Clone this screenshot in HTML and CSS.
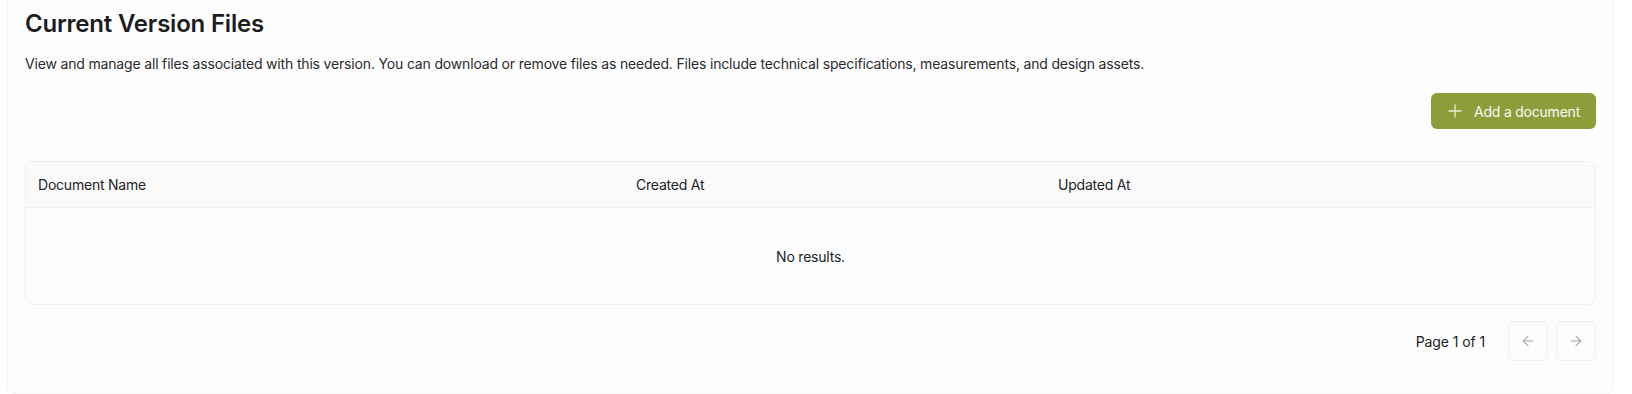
FILE: index.html
```html
<!DOCTYPE html>
<html lang="en">
<head>
    <meta charset="UTF-8">
    <meta name="viewport" content="width=device-width, initial-scale=1.0">
    <title>Current Version Files</title>
    <link rel="stylesheet" href="styles.css">
</head>
<body>
    <div class="page">
        <div class="card">
            <h1 class="card-title">Current Version Files</h1>
            <p class="card-desc">View and manage all files associated with this version. You can download or remove files as needed. Files include technical specifications, measurements, and design assets.</p>

            <div class="toolbar">
                <button class="btn-primary" type="button">
                    <svg width="18" height="18" viewBox="0 0 24 24" fill="none" stroke="currentColor" stroke-width="1.8" stroke-linecap="round" stroke-linejoin="round">
                        <path d="M4 12h16"/>
                        <path d="M12 4v16"/>
                    </svg>
                    <span>Add a document</span>
                </button>
            </div>

            <div class="table-wrap">
                <table class="doc-table">
                    <colgroup>
                        <col class="col-name">
                        <col class="col-created">
                        <col class="col-updated">
                    </colgroup>
                    <thead>
                        <tr>
                            <th>Document Name</th>
                            <th>Created At</th>
                            <th>Updated At</th>
                        </tr>
                    </thead>
                    <tbody>
                        <tr>
                            <td class="empty" colspan="3">No results.</td>
                        </tr>
                    </tbody>
                </table>
            </div>

            <div class="pagination">
                <span class="page-info">Page 1 of 1</span>
                <div class="page-buttons">
                    <button class="btn-page" type="button" disabled>
                        <svg width="16" height="16" viewBox="0 0 24 24" fill="none" stroke="currentColor" stroke-width="1.6" stroke-linecap="round" stroke-linejoin="round">
                            <path d="m12 19-7-7 7-7"/>
                            <path d="M19 12H5"/>
                        </svg>
                    </button>
                    <button class="btn-page" type="button" disabled>
                        <svg width="16" height="16" viewBox="0 0 24 24" fill="none" stroke="currentColor" stroke-width="1.6" stroke-linecap="round" stroke-linejoin="round">
                            <path d="M5 12h14"/>
                            <path d="m12 5 7 7-7 7"/>
                        </svg>
                    </button>
                </div>
            </div>
        </div>
    </div>
</body>
</html>
```

FILE: styles.css
```css
body {
    margin: 0;
    background-color: #fff;
    font-family: Inter, "Noto Sans", Arial, sans-serif;
    color: #1f2124;
}

.page {
    margin: 0 18px 0 7px;
}

.card {
    background-color: #fdfdfd;
    border: 1px solid #f2f2f2;
    border-top: none;
    border-radius: 0 0 8px 8px;
    padding: 8px 17px 32px;
}

.card-title {
    margin: 0;
    font-size: 24px;
    line-height: 32px;
    font-weight: 600;
    letter-spacing: -0.2px;
    color: #1c1e21;
}

.card-desc {
    margin: 14px 0 0;
    font-size: 14px;
    line-height: 20px;
    letter-spacing: -0.17px;
    color: #2a2c2f;
}

.toolbar {
    display: flex;
    justify-content: flex-end;
    margin-top: 19px;
}

.btn-primary {
    display: flex;
    align-items: center;
    gap: 10px;
    height: 36px;
    padding: 0 16px 0 15px;
    background-color: #8f9c3b;
    border: none;
    border-radius: 6px;
    color: #fafaf2;
    font-family: inherit;
    font-size: 14px;
    letter-spacing: -0.22px;
    cursor: pointer;
}

.btn-primary svg {
    color: #e8ebd3;
}

.table-wrap {
    margin-top: 32px;
    border: 1px solid #efefef;
    border-radius: 8px;
    overflow: hidden;
}

.doc-table {
    width: 100%;
    border-collapse: collapse;
    table-layout: fixed;
    font-size: 14px;
    letter-spacing: -0.22px;
}

.col-name {
    width: 598px;
}

.col-created {
    width: 422px;
}

.doc-table th {
    height: 45px;
    padding: 0 12px;
    background-color: #fafafa;
    border-bottom: 1px solid #efefef;
    text-align: left;
    font-weight: 400;
    color: #222428;
}

.doc-table td.empty {
    height: 96px;
    padding: 0;
    text-align: center;
    background-color: #fdfdfd;
    color: #222428;
}

.pagination {
    display: flex;
    justify-content: flex-end;
    align-items: center;
    gap: 23px;
    margin-top: 16px;
}

.page-info {
    font-size: 14px;
    letter-spacing: -0.1px;
    color: #222428;
}

.page-buttons {
    display: flex;
    gap: 8px;
}

.btn-page {
    width: 40px;
    height: 40px;
    display: flex;
    align-items: center;
    justify-content: center;
    background-color: #fdfdfd;
    border: 1px solid #f0f0f0;
    border-radius: 6px;
    color: #a6a6a6;
    padding: 0;
}
```
